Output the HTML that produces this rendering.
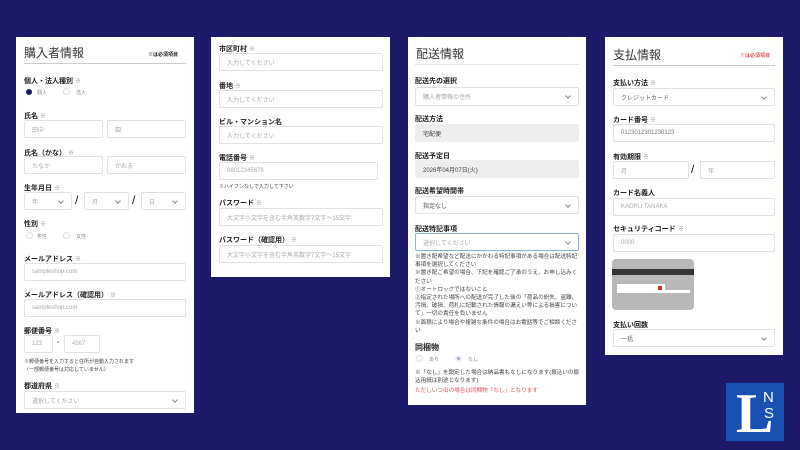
<!DOCTYPE html><html><head><meta charset="utf-8"><style>
*{margin:0;padding:0;box-sizing:border-box}
body{width:800px;height:450px;background:#1d1a6b;position:relative;overflow:hidden;font-family:"Liberation Sans","Noto Sans CJK JP",sans-serif;color:#222}
.p{position:absolute;background:#fff}
.a{position:absolute;white-space:nowrap}
.t{font-size:12px;color:#333}
.l{font-size:7px;font-weight:bold;color:#222}
.l i{font-style:normal;font-weight:normal;color:#888;font-size:6px;margin-left:2px}
.in{position:absolute;border:1px solid #e2e2e2;border-radius:2px;background:#fff;font-size:6px;color:#aaa;padding-left:7px;display:flex;align-items:center}
.g{background:#eee;border-color:#eee;color:#444}
.s::after{content:"";position:absolute;right:8px;top:6px;width:3px;height:3px;border-right:1px solid #888;border-bottom:1px solid #888;transform:rotate(45deg)}
.hr{position:absolute;height:1px;background:#ccc}
.r{position:absolute;width:7px;height:7px;border-radius:50%;border:1px solid #ddd}
.sm{font-size:5px;color:#444}
</style></head><body>
<!-- panel 1 -->
<div class="p" style="left:16px;top:37px;width:178px;height:376px"></div>
<div class="a t" style="left:24px;top:44px">購入者情報</div>
<div class="a" style="left:148px;top:51px;font-size:5px;font-weight:bold">※は必須項目</div>
<div class="hr" style="left:24px;top:63px;width:162px"></div>
<div class="a l" style="left:24px;top:76px">個人・法人種別<i>※</i></div>
<div class="r" style="left:26px;top:89px;background:#1d1a6b;border-color:#1d1a6b;width:6px;height:6px"></div><div class="a sm" style="left:37px;top:89px;color:#888">個人</div>
<div class="r" style="left:63px;top:88px"></div><div class="a sm" style="left:76px;top:89px;color:#888">法人</div>
<div class="a l" style="left:24px;top:111px">氏名<i>※</i></div>
<div class="in" style="left:24px;top:120px;width:79px;height:18px">田中</div>
<div class="in" style="left:107px;top:120px;width:79px;height:18px">園</div>
<div class="a l" style="left:24px;top:148px">氏名（かな）<i>※</i></div>
<div class="in" style="left:24px;top:156px;width:79px;height:18px">たなか</div>
<div class="in" style="left:107px;top:156px;width:79px;height:18px">かおる</div>
<div class="a l" style="left:24px;top:183px">生年月日<i>※</i></div>
<div class="in s" style="left:24px;top:192px;width:48px;height:18px">年</div>
<div class="a" style="left:75px;top:193px;font-size:12px">/</div>
<div class="in s" style="left:84px;top:192px;width:45px;height:18px">月</div>
<div class="a" style="left:132px;top:193px;font-size:12px">/</div>
<div class="in s" style="left:141px;top:192px;width:45px;height:18px">日</div>
<div class="a l" style="left:24px;top:219px">性別<i>※</i></div>
<div class="r" style="left:26px;top:232px"></div><div class="a sm" style="left:37px;top:233px;color:#888">男性</div>
<div class="r" style="left:63px;top:232px"></div><div class="a sm" style="left:76px;top:233px;color:#888">女性</div>
<div class="a l" style="left:24px;top:254px">メールアドレス<i>※</i></div>
<div class="in" style="left:24px;top:263px;width:162px;height:18px">sampleshop.com</div>
<div class="a l" style="left:24px;top:290px">メールアドレス（確認用）<i>※</i></div>
<div class="in" style="left:24px;top:299px;width:162px;height:18px">sampleshop.com</div>
<div class="a l" style="left:24px;top:326px">郵便番号<i>※</i></div>
<div class="in" style="left:24px;top:335px;width:29px;height:18px">123</div>
<div class="a" style="left:57px;top:340px;font-size:6px;font-weight:bold">-</div>
<div class="in" style="left:64px;top:335px;width:36px;height:18px">4567</div>
<div class="a sm" style="left:24px;top:358px">※郵便番号を入力すると住所が自動入力されます</div>
<div class="a sm" style="left:24px;top:366px">（一部郵便番号は対応していません）</div>
<div class="a l" style="left:24px;top:381px">都道府県<i>※</i></div>
<div class="in s" style="left:24px;top:391px;width:162px;height:18px">選択してください</div>
<!-- panel 2 -->
<div class="p" style="left:211px;top:37px;width:179px;height:240px"></div>
<div class="a l" style="left:219px;top:44px">市区町村<i>※</i></div>
<div class="in" style="left:219px;top:53px;width:164px;height:18px">入力してください</div>
<div class="a l" style="left:219px;top:81px">番地<i>※</i></div>
<div class="in" style="left:219px;top:90px;width:164px;height:18px">入力してください</div>
<div class="a l" style="left:219px;top:117px">ビル・マンション名</div>
<div class="in" style="left:219px;top:126px;width:164px;height:18px">入力してください</div>
<div class="a l" style="left:219px;top:153px">電話番号<i>※</i></div>
<div class="in" style="left:219px;top:162px;width:159px;height:18px">08012345678</div>
<div class="a sm" style="left:219px;top:183px">※ハイフンなしで入力して下さい</div>
<div class="a l" style="left:219px;top:198px">パスワード<i>※</i></div>
<div class="in" style="left:219px;top:208px;width:164px;height:18px;overflow:hidden">大文字小文字を含む半角英数字7文字〜15文字</div>
<div class="a l" style="left:219px;top:235px">パスワード（確認用）<i>※</i></div>
<div class="in" style="left:219px;top:245px;width:164px;height:18px;overflow:hidden">大文字小文字を含む半角英数字7文字〜15文字</div>
<!-- panel 3 -->
<div class="p" style="left:408px;top:37px;width:178px;height:368px"></div>
<div class="a t" style="left:416px;top:45px">配送情報</div>
<div class="hr" style="left:415px;top:64px;width:164px;background:#e4e4e4"></div>
<div class="a l" style="left:415px;top:76px">配送先の選択</div>
<div class="in s" style="left:415px;top:87px;width:164px;height:19px">購入者情報の住所</div>
<div class="a l" style="left:415px;top:114px">配送方法</div>
<div class="in g" style="left:415px;top:124px;width:164px;height:18px">宅配便</div>
<div class="a l" style="left:415px;top:151px">配送予定日</div>
<div class="in g" style="left:415px;top:160px;width:164px;height:18px">2026年04月07日(火)</div>
<div class="a l" style="left:415px;top:186px">配送希望時間帯</div>
<div class="in s" style="left:415px;top:196px;width:164px;height:18px;color:#555">指定なし</div>
<div class="a l" style="left:415px;top:224px">配送特記事項</div>
<div class="in s" style="left:415px;top:233px;width:164px;height:18px;border-color:#8ab0e0">選択してください</div>
<div class="a sm" style="left:415px;top:253px;font-size:5.6px;line-height:8.2px;white-space:normal;width:166px">※置き配希望など配送にかかわる特記事項がある場合は配送特記事項を選択してください<br>※置き配ご希望の場合、下記を確認ご了承のうえ、お申し込みください<br>①オートロックではないこと<br>②指定された場所への配送が完了した後の「荷品の紛失、盗難、汚損、破損、荷札に記載された情報の漏えい等による損害について」一切の責任を負いません<br>※面積により場合や複雑な条件の場合はお電話等でご相談ください</div>
<div class="a" style="left:415px;top:342px;font-size:8px;font-weight:bold">同梱物</div>
<div class="r" style="left:416px;top:355px"></div><div class="a sm" style="left:429px;top:356px;color:#888">あり</div>
<div class="r" style="left:455px;top:355px;background:#aab;border:2px solid #eef;"></div><div class="a sm" style="left:468px;top:356px;color:#888">なし</div>
<div class="a sm" style="left:415px;top:369px;font-size:5.6px;line-height:8.2px;white-space:normal;width:168px">※「なし」を設定した場合は納品書もなしになります(振込いの振込用紙は別途となります)</div>
<div class="a sm" style="left:415px;top:386px;font-size:5.6px;color:#e05560">ただしいつ出の場合は同梱物「なし」となります</div>
<!-- panel 4 -->
<div class="p" style="left:605px;top:37px;width:178px;height:318px"></div>
<div class="a t" style="left:613px;top:46px">支払情報</div>
<div class="a" style="left:740px;top:52px;font-size:5px;color:#e05560;font-weight:bold">※は必須項目</div>
<div class="hr" style="left:613px;top:65px;width:162px"></div>
<div class="a l" style="left:613px;top:78px">支払い方法<i>※</i></div>
<div class="in s" style="left:613px;top:88px;width:162px;height:18px;color:#666">クレジットカード</div>
<div class="a l" style="left:613px;top:115px">カード番号<i>※</i></div>
<div class="in" style="left:613px;top:124px;width:162px;height:18px;color:#777">0123012301230123</div>
<div class="a l" style="left:613px;top:152px">有効期限<i>※</i></div>
<div class="in" style="left:613px;top:161px;width:76px;height:18px">月</div>
<div class="a" style="left:691px;top:162px;font-size:12px">/</div>
<div class="in" style="left:700px;top:161px;width:75px;height:18px">年</div>
<div class="a l" style="left:613px;top:188px">カード名義人</div>
<div class="in" style="left:613px;top:198px;width:162px;height:18px">KAORU TANAKA</div>
<div class="a l" style="left:613px;top:224px">セキュリティコード<i>※</i></div>
<div class="in" style="left:613px;top:234px;width:162px;height:18px">0000</div>
<div class="a" style="left:612px;top:259px;width:82px;height:51px;background:#b8b8b8;border-radius:4px;overflow:hidden">
<div style="position:absolute;left:0;top:10px;width:82px;height:6px;background:#333"></div>
<div style="position:absolute;left:5px;top:25px;width:48px;height:9px;background:#fff"></div>
<div style="position:absolute;left:46px;top:27px;width:4px;height:4px;background:#c33"></div>
<div style="position:absolute;left:52px;top:31px;width:26px;height:3px;background:#fff"></div>
</div>
<div class="a l" style="left:613px;top:320px">支払い回数</div>
<div class="in s" style="left:613px;top:329px;width:162px;height:18px;color:#555">一括</div>
<!-- logo -->
<div class="a" style="left:726px;top:383px;width:58px;height:58px;background:#1b50b3">
<div class="a" style="left:10px;top:3px;font-family:'Liberation Serif',serif;font-size:56px;line-height:56px;color:#fff;font-weight:bold">L</div>
<div class="a" style="left:37px;top:7px;font-size:15px;line-height:15px;color:#fff">N</div>
<div class="a" style="left:38px;top:23px;font-size:15px;line-height:15px;color:#fff">S</div>
</div>
</body></html>
